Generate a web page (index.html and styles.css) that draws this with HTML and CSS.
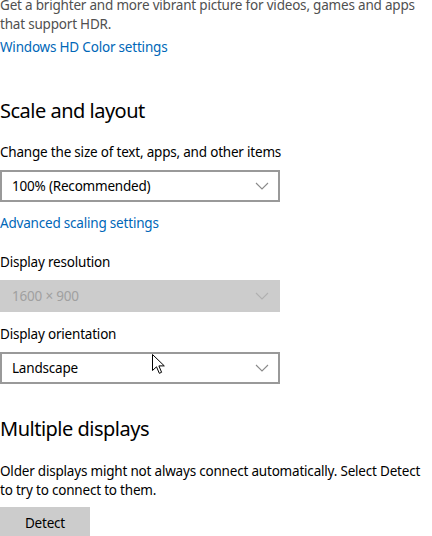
FILE: index.html
```html
<!DOCTYPE html>
<html>
<head>
<meta charset="utf-8">
<link rel="stylesheet" href="styles.css">
</head>
<body>
<div class="page">
  <p class="desc">Get a brighter and more vibrant picture for videos, games and apps that support HDR.</p>
  <a class="link first-link">Windows HD Color settings</a>

  <h2 class="heading scale-heading">Scale and layout</h2>
  <div class="label size-label">Change the size of text, apps, and other items</div>
  <div class="select">
    <span>100% (Recommended)</span>
    <svg class="chev" width="14" height="8" viewBox="0 0 14 8"><path d="M1 1 L7 7 L13 1" fill="none" stroke="#8a8a8a" stroke-width="1.1"/></svg>
  </div>
  <a class="link adv-link">Advanced scaling settings</a>

  <div class="label res-label">Display resolution</div>
  <div class="select disabled">
    <span>1600 × 900</span>
    <svg class="chev" width="14" height="8" viewBox="0 0 14 8"><path d="M1 1 L7 7 L13 1" fill="none" stroke="#b0b0b0" stroke-width="1.1"/></svg>
  </div>

  <div class="label orient-label">Display orientation</div>
  <div class="select orient">
    <span>Landscape</span>
    <svg class="chev" width="14" height="8" viewBox="0 0 14 8"><path d="M1 1 L7 7 L13 1" fill="none" stroke="#8a8a8a" stroke-width="1.1"/></svg>
    <svg class="cursor" width="14" height="22" viewBox="0 0 14 22"><path d="M0.5 0.5 L0.5 16.5 L4.5 12.8 L7.3 19.3 L9.6 18.3 L6.9 11.9 L12.3 11.9 Z" fill="#fff" stroke="#000" stroke-width="1"/></svg>
  </div>

  <h2 class="heading multi-heading">Multiple displays</h2>
  <p class="body">Older displays might not always connect automatically. Select Detect to try to connect to them.</p>
  <button class="btn">Detect</button>
</div>
</body>
</html>
```
FILE: styles.css
```css
html, body {
  margin: 0;
  padding: 0;
  background: #fff;
}
.page {
  font-family: "Noto Sans", "Open Sans", sans-serif;
  font-size: 13.5px;
  letter-spacing: -0.2px;
  line-height: 19px;
  color: #000;
  display: flex;
  flex-direction: column;
  align-items: flex-start;
  margin-top: -4px;
}
.desc {
  margin: 0;
  color: #505050;
  width: 425px;
}
.link {
  color: #0067b8;
  text-decoration: none;
  cursor: pointer;
}
.first-link {
  margin-top: 4px;
}
.heading {
  font-weight: 400;
  font-size: 20px;
  letter-spacing: -0.5px;
  line-height: 28px;
  margin: 0;
}
.scale-heading {
  margin-top: 40px;
}
.size-label {
  margin-top: 18px;
}
.select {
  position: relative;
  margin-top: 8px;
  box-sizing: border-box;
  width: 280px;
  height: 32px;
  border: 2px solid #999;
  display: flex;
  align-items: center;
  justify-content: space-between;
  padding: 0 9px 0 10px;
}
.select.disabled {
  border-color: #cccccc;
  background: #cccccc;
  color: #a0a0a0;
}
.chev {
  display: block;
}
.adv-link {
  margin-top: 12px;
}
.res-label {
  margin-top: 20px;
}
.orient-label {
  margin-top: 13px;
}
.cursor {
  position: absolute;
  left: 150px;
  top: 0;
}
.multi-heading {
  margin-top: 31px;
}
.body {
  margin: 19px 0 0 0;
  width: 430px;
}
.btn {
  margin-top: 7px;
  width: 90px;
  height: 32px;
  border: none;
  background: #cccccc;
  font-family: inherit;
  font-size: 13.5px;
  letter-spacing: -0.2px;
  color: #000;
  padding: 0;
}
```
